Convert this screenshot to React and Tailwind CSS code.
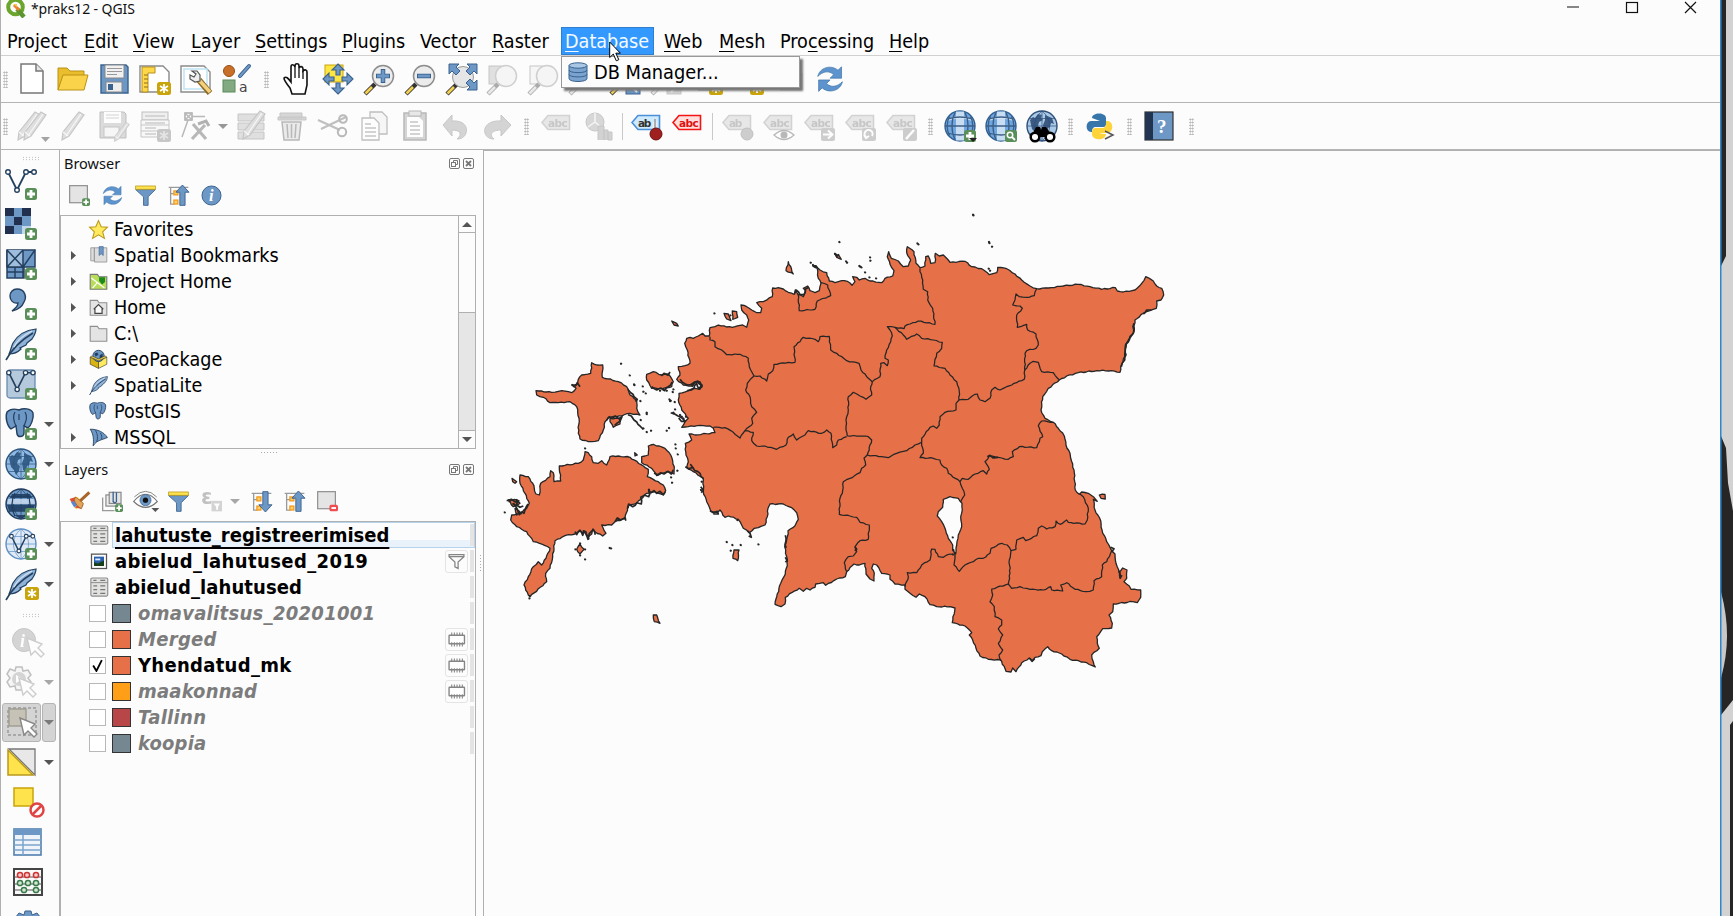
import React from "react";

/* ---------- geometry helpers ---------- */

// Reads "x,y x,y ..." given in thirds of a pixel from the origin (ox, oy).
const seg = (ox, oy, s) =>
  s.trim().split(/\s+/).map((p) => {
    const [x, y] = p.split(",").map(Number);
    return [ox + x / 3, oy + y / 3];
  });
const W = (s) => seg(500, 340, s);
const N = (s) => seg(660, 200, s);
const NE = (s) => seg(930, 200, s);
const S = (s) => seg(660, 430, s);
const SE = (s) => seg(930, 430, s);

// Adds a small deterministic wiggle so that lines look like surveyed borders.
const rough = (pts, amp, closed) => {
  const out = [];
  const n = pts.length;
  const last = closed ? n : n - 1;
  for (let i = 0; i < last; i++) {
    const [x0, y0] = pts[i];
    const [x1, y1] = pts[(i + 1) % n];
    out.push([x0, y0]);
    const len = Math.hypot(x1 - x0, y1 - y0);
    const k = Math.floor(len / 2.6);
    for (let j = 1; j < k; j++) {
      const t = j / k;
      const r = Math.sin((x0 * 12.9898 + y0 * 78.233 + j * 37.719) * 43.758) * amp;
      out.push([x0 + (x1 - x0) * t - ((y1 - y0) / len) * r, y0 + (y1 - y0) * t + ((x1 - x0) / len) * r]);
    }
  }
  if (!closed) out.push(pts[n - 1]);
  return out;
};
const toPath = (pts, closed, amp = 0.5) =>
  "M" + rough(pts, amp, closed).map((p) => p[0].toFixed(1) + " " + p[1].toFixed(1)).join("L") + (closed ? "Z" : "");

const mainland = [
  ...N("90,490 82,450 74,430 80,415 90,412 100,415 115,408 128,400 135,408 148,408 150,383 165,380 175,375 200,381 225,380 248,375 260,382 266,360 260,345 245,330 243,315 260,320 275,330 290,338 302,338 305,325 290,308 310,305 337,290 338,264 355,263 370,267 385,277 403,283 406,270 414,283 430,290 437,272 430,265 443,258 450,272 465,278 478,272 483,250 475,235 472,205 458,198 468,197 480,210 500,218 508,243 525,248 545,242 562,244 576,256 585,245 578,230 590,232 598,240 615,235 630,243 665,248 675,235 698,228 702,212 690,193 682,170 686,155 694,175 715,183 730,200 745,198 752,180 740,158 742,140 762,155 768,190 780,203 795,198 797,170 805,168 812,190 825,188 826,160 838,168 850,165 865,180"),
  ...NE("60,187 105,184 125,200 155,206 178,224 200,218 203,202 230,206 255,222 275,240 300,258 320,266 355,264 400,258 445,253 480,260 515,268 556,263 562,273 580,276 615,270 635,250 647,230 670,243 680,258 695,265 701,285 693,300 680,303 679,325 660,332 640,340 615,360 612,395 603,410 586,435 584,470 572,500 570,517 545,512 500,512 445,518 410,528 388,540 355,565 338,590 333,630 345,655 370,667 385,685 403,708 408,735 420,760"),
  ...SE("422,85 432,120 436,180 448,193 455,186 475,190 492,202 502,214 490,208 495,240 512,272 516,300 530,335 545,362 555,372 558,400 566,420 572,445 570,425 578,414 591,420 590,445 582,455 598,468 603,478 632,480 632,502 622,518 608,515 550,522 548,545 537,555 547,580 545,594 518,596 500,620 502,640 508,655 485,675 490,695 496,711 470,698 420,688 395,672 365,662 353,650 337,665 333,677 315,682 308,692 298,684 275,698 258,725 248,714 243,726 228,724 215,695 212,690 175,688 150,678 138,655 128,630 118,615 125,608 105,588 67,578 75,534 60,530 20,530 0,524"),
  ...S("795,500 778,492 768,502 750,490 735,478 735,465 705,462 690,448 690,435 665,430 650,405 640,402 635,415 643,430 642,453 630,447 618,432 615,400 598,405 582,402 560,425 556,440 530,447 497,466 490,458 467,462 465,472 450,480 440,475 430,484 418,475 395,488 376,502 375,522 363,530 345,523 350,500 362,460 372,440 382,407 380,380 374,350 382,320 384,302 405,287 415,268 410,248 395,233 370,222 330,222 324,235 322,260 315,285 295,293 283,295 268,308 250,295 235,268 205,258 195,262 180,240 172,248 152,243 140,215 130,185 130,145 100,125 80,112 85,95 78,75 76,40 95,30 87,12 105,15 165,8"),
  ...N("160,685 150,678 120,676 85,680 65,682 75,665 85,655 65,630 55,600 57,580 85,572 105,565 120,568 127,555 110,545 95,558 70,555 50,538 60,525 55,500 75,497"),
];

const lake = SE("40,208 60,200 85,205 96,220 97,240 92,260 95,290 85,315 80,345 77,372 68,360 68,345 55,325 45,295 35,275 22,258 25,245 38,232");

const borders = [
  N("150,410 150,420 165,425 165,440 185,450 200,464 240,463 265,475 268,500 275,515 282,528"),
  N("282,528 300,528 320,543 325,522 338,512 342,493 385,487 405,487 402,440 420,425 430,412 465,418 475,425 480,410 508,409 512,450 530,460 560,482 597,490 603,510 620,530 637,545"),
  N("282,528 262,550 257,570 270,590 275,620 290,637 275,655 278,670 255,692"),
  N("160,682 195,683 220,697 240,714 255,692 280,697 275,722 290,738 315,738 350,748 378,735 385,712 400,702 410,720 435,705 445,692 485,700 500,690 513,700 518,743 530,735 535,720 560,710"),
  N("637,545 632,560 635,585 618,598 600,588 580,577 565,590 565,630 560,650 558,680 562,708"),
  N("637,545 660,530 662,490 672,488 682,497 685,480 675,475 680,450 692,425 697,408 690,390 682,380 705,382"),
  N("780,205 780,215 788,240 790,268 803,275 803,300 818,325 825,373 775,363 750,372 735,378 732,386 705,382"),
  [...N("705,382 735,410 740,418 770,402 785,415 820,420 847,427 845,445 830,460 822,498 855,505 870,525"), ...NE("80,545 88,575 87,600 115,598 135,583 142,582 150,600 165,605 180,595 185,570 195,562 210,570 230,560 260,548 283,538 284,510")],
  NE("320,266 313,287 290,292 268,290 258,282 255,300 248,315 270,318 277,325 260,345 262,382 290,373 293,390 318,402 325,435 318,445 290,452 285,460 284,510 300,490 310,484 325,487 335,515 370,518 388,540"),
  [...NE("87,600 78,610 78,630 45,637 30,650 28,675 20,685 10,678 0,682"), ...N("785,715 785,727")],
  [...N("562,708 600,708 625,710 635,720 622,765"), ...S("665,80 685,83 710,70 740,62 765,45 785,37")],
  S("622,75 612,85 617,105 605,115 600,128 570,145 550,155 547,190 540,205 538,253 570,258 590,262 600,277 628,285 625,328 600,332 585,350 590,365 580,378 565,380 553,398 560,425"),
  [...S("785,37 790,70 780,83 820,85 840,90 845,105 860,115 865,130"), ...SE("90,155 97,175 104,195 92,215")],
  [...SE("90,155 97,145 115,148 135,132 160,122 170,132 178,118 165,95 178,78 205,82 235,88 250,80 247,65 268,50 320,53 330,25 338,20"), ...NE("325,677 335,663 370,667")],
  [...S("735,470 745,440 742,428 770,428 785,405 810,390 815,357 825,358 835,380 850,382 870,372"), ...SE("75,375 72,405 88,424 105,405 130,395 145,385 160,385 180,370 183,355 215,340 232,345 243,362")],
  SE("243,362 258,358 260,330 280,322 287,332 320,317 325,295 335,288 350,297 375,290 378,273 390,283 410,270 415,277 465,282 472,270 475,235 460,200 450,192"),
  SE("243,362 238,390 240,430 235,462 245,475 270,470 300,478 340,480 362,470 365,480 398,483 392,465 410,458 435,478 468,485 490,480 492,452 515,440 517,405 530,395 545,362"),
  SE("235,462 185,477 188,495 180,515 193,530 195,560 215,570 215,585 205,597 218,615 205,640 218,660 207,675 213,692"),
  N("414,283 418,332 465,328 472,303 512,287 503,255 483,248"),
];

const islands = [
  W("108,152 155,157 185,152 215,158 228,145 215,135 232,132 235,118 245,105 272,100 275,68 290,75 308,75 307,112 355,125 380,140 390,165 410,180 410,205 420,225 390,220 350,230 325,232 315,245 310,270 295,302 265,305 240,297 235,280 237,235 230,200 210,185 175,188 150,188 130,172 110,165"),
  W("330,235 358,235 360,252 340,262 330,245"),
  W("440,103 460,95 485,105 505,102 520,125 515,140 490,145 455,145 440,120"),
  W("445,318 460,313 495,325 512,345 523,380 522,402 500,395 470,407 455,385 425,368 425,350 445,345"),
  W("255,335 265,338 275,350 280,368 295,370 305,362 320,375 330,350 355,348 390,352 430,378 445,388 442,410 475,425 490,435 497,452 490,465 465,455 440,460 410,490 385,495 375,535 345,545 335,555 305,555 318,580 308,588 285,575 278,568 275,582 265,590 258,575 250,572 248,585 240,570 225,582 195,587 165,602 158,650 150,685 137,700 140,725 90,770 85,765 72,735 85,710 100,680 115,665 125,675 138,655 150,625 125,612 100,605 80,575 50,560 32,540 35,525 60,520 80,505 88,490 75,460 60,430 60,405 85,410 98,430 108,462 118,465 122,430 150,410 152,392 160,398 162,425 182,423 178,378 235,370 250,360"),
  W("240,612 252,628 240,642 230,628"),
  W("460,825 470,825 480,850 463,845"),
  W("702,630 717,630 713,662 699,655"),
  N("385,185 400,222 378,212"),
  N("192,340 205,342 213,362 200,357"),
  N("217,333 230,335 233,352 218,358"),
  N("35,363 50,370 55,378 42,375"),
  N("524,160 538,168 544,178 530,172"),
  SE("508,195 525,193 526,207 513,205"),
  W("36,415 50,425 45,430 38,425"),
  W("25,480 50,480 60,490 40,500"),
  W("45,505 60,515 50,525"),
  W("404,338 412,345 405,348"),
];

// Ragged shoals: short heavy strokes along the shallow coasts.
const shoals = [
  W("383,148 392,158 402,170 412,178 406,184"),
  W("320,240 328,230 338,234 346,228 356,236 366,230 360,244 344,256"),
  W("384,224 394,228 402,240 410,246 420,258 430,268"),
  W("215,133 222,140 232,128 240,140"),
  W("445,448 452,458 462,452 470,460 480,454 490,464 496,456"),
  W("384,505 386,492 398,500 410,488 424,492 422,472 434,466 446,470 448,446"),
  W("345,545 352,534 362,540 374,534 378,542"),
  W("225,575 230,584 240,572 248,586 252,574 264,598 268,580 280,568 286,584"),
  W("20,482 34,478 46,486 56,482 48,494 60,502 70,498"),
  W("40,490 52,508 58,524 66,516 72,520 84,492"),
  W("462,400 474,404 482,398 492,402 504,394 514,402 520,390"),
  W("630,512 640,518 652,514 655,522 640,522"),
  W("556,380 566,386 578,382 572,374 584,392 600,400 610,416"),
  W("602,440 610,450 604,458"),
  W("742,572 750,580 754,592 746,588"),
  W("540,118 556,132 572,134 584,126 600,126 606,140 596,146 590,130 582,144 574,150 562,152"),
  W("512,218 524,222 534,228 548,236 556,244 544,244 536,234"),
  W("455,140 470,150 482,144 494,152 505,140 516,126"),
  W("484,108 492,100 504,106 510,96"),
  N("405,280 408,270 420,284 432,284 436,268 446,262"),
  N("96,560 104,548 114,544 124,556 118,566"),
  NE("640,342 650,330 664,330"),
  NE("612,370 610,400 600,410 588,440 584,480 574,500"),
  SE("545,366 552,356 542,352"),
  SE("566,422 570,444 576,436"),
  SE("298,684 306,694 314,686"),
  SE("172,80 180,76 190,84 204,82"),
  S("376,316 378,352 374,346"),
  S("376,382 382,392 376,396"),
  S("585,350 590,358 584,362"),
];

const specks = [
  ...W("363,71 389,106 402,133 428,139 437,160 421,183 430,155 440,222 422,240 430,265 440,276 453,272 500,272 507,264 518,156 512,182 524,186 525,208 520,218 526,313 527,325 533,343 513,412 516,428 532,392 255,325 255,658 333,625 329,624 88,775 90,768 14,517 40,492 62,520 50,480 28,484 680,606 697,615 692,632 775,613 722,615 240,646 240,610 255,628 226,628 265,596 490,148 480,152 500,152 603,450 605,425 712,540 355,537 375,535 440,218 403,135 508,178"),
  ...N("538,126 775,133 772,130 630,172 631,182 598,198 604,202 601,200 615,217 628,232 648,235 452,188 459,195 466,199 558,184 561,188 163,340 525,162 530,168 535,165 211,346 65,650 70,655 60,645 78,650 40,640 40,568 30,603"),
  ...NE("129,44 130,46 177,126 178,129 186,140 176,206 180,212"),
  ...SE("68,322 70,360 74,370 68,373"),
];

/* ---------- small icon pieces ---------- */

const B = "#6d97c5";
const BD = "#3a628f";

const Ico = ({ children, s = "size-8", className = "" }) => (
  <svg viewBox="0 0 32 32" className={`${s} shrink-0 overflow-visible ${className}`} fill="none">{children}</svg>
);
const Plus = ({ x = 20, y = 20 }) => (
  <g>
    <rect x={x} y={y} width="12" height="12" rx="2.5" fill="#5a8f5a" />
    <path d={`M${x + 6} ${y + 2}v8M${x + 2} ${y + 6}h8`} stroke="#fff" strokeWidth="2.8" />
  </g>
);
const Star = ({ x = 19, y = 19 }) => (
  <g>
    <rect x={x} y={y} width="14" height="13" rx="2.5" fill="#c9a40a" />
    <path d={`M${x + 7} ${y + 2}v9M${x + 3} ${y + 4}l8 5M${x + 11} ${y + 4}l-8 5`} stroke="#fff" strokeWidth="1.8" />
  </g>
);
const Handle = () => (
  <g>
    <path d="M12 21L2 31" stroke="#333" strokeWidth="4.4" />
    <path d="M9 24L2.5 30.5" stroke="#f3d04e" strokeWidth="2.6" />
  </g>
);
const Zoom = ({ children }) => (
  <g>
    <Handle />
    <circle cx="20" cy="13" r="10.5" fill="#ececec" stroke="#8d8d8d" strokeWidth="1.5" />
    {children}
  </g>
);
const Pencil = ({ x = 0, y = 0 }) => (
  <g transform={`translate(${x} ${y})`}>
    <path d="M22 2l5 3L12 26l-7 4 1-8z" fill="#b9b4ac" stroke="#777" strokeWidth="1.2" />
    <path d="M24 4L9 26M6 22l5 4" stroke="#f2f0ec" strokeWidth="1.2" />
  </g>
);
const Tag = ({ fill = "#cfcac0", stroke = "#9b968c", ink = "#777", text = "abc" }) => (
  <g>
    <path d="M2 12.500L8 5.500H29.500V19.500H8z" fill={fill} stroke={stroke} strokeWidth="1.6" />
    <text x="8" y="16.500" fontSize="10.500" fontWeight="bold" fontFamily="DejaVu Sans" fill={ink} textLength={text.length * 6.6}>{text}</text>
  </g>
);
const Globe = ({ fill = "#9fc3e6", ink = "#3f6b98", land }) => (
  <g>
    <circle cx="16" cy="16" r="15" fill={fill} stroke={ink} strokeWidth="1.4" />
    {land ? (
      <path d="M4 10l3-3 2 1 3-4 4 1-1 3 2 2-4 2-1 4 3 2-1 5-3 4-2-5-3-3zM19 5l7 3 2 6-3-1-1 4-2 1-1 6-3-2-1-7 2-5z" fill={ink} opacity=".9" />
    ) : null}
    <path d="M1 16h30M3.500 8.500h25M3.500 23.500h25M16 1v30M16 1c-10 8-10 22 0 30M16 1c10 8 10 22 0 30" stroke={ink} strokeWidth="1" opacity=".7" />
  </g>
);
const ShinyGlobe = () => (
  <g>
    <circle cx="16" cy="16" r="15" fill="#6fa6e0" stroke="#2f5f92" strokeWidth="1.4" />
    <path d="M12 1.500h8v29h-8z" fill="#c9ddf2" /><path d="M4 9c6-4 18-4 24 0v2c-8-3-16-3-24 0z" fill="#dce9f6" opacity=".7" />
    <path d="M1 16h30M3.500 9q12.500-4 25 0M3.500 23q12.500 4 25 0M11 2.500c-4 8-4 19 0 27M21 2.500c4 8 4 19 0 27M5.500 6.500c-3 6-3 13 0 19M26.500 6.500c3 6 3 13 0 19" stroke="#3c5f86" strokeWidth="1.300" />
  </g>
);
const Feather = () => (
  <g>
    <path d="M31 1C22 2 13 6 8 15c-2 4-2 7-4 11 4 0 8-1 12-5l-1-1 6-3 1-2 5-4c2-3 4-6 4-10z" fill="#8fb2d8" stroke="#24405f" strokeWidth="1.200" />
    <path d="M28 5C18 11 8 19 1 32" stroke="#24405f" strokeWidth="1.600" />
    <path d="M27 3C19 7 12 12 9 19" stroke="#d3e2f1" strokeWidth="1.300" />
  </g>
);
const Elephant = () => (
  <g>
    <path d="M2 4c4-4 9-3 12-2 4-2 12-2 14 3 1 5-2 13-5 15l-4-2v7c0 4-6 5-7 1l-1-8-5 3C2 18 0 9 2 4z" fill={B} stroke="#24405f" strokeWidth="1.4" />
    <path d="M10 4c-3 5-1 10 1 14M20 4c3 5 1 9-1 14M14 6v6" stroke="#24405f" strokeWidth="1.2" />
  </g>
);
const Vee = ({ c = "#24405f" }) => (
  <g stroke={c} strokeWidth="1.8">
    <path d="M3 4l9 18 9-18h8" />
    <g fill="#fff" strokeWidth="1.4">
      <circle cx="3" cy="4" r="2.3" /><circle cx="12" cy="22" r="2.3" /><circle cx="21" cy="4" r="2.3" /><circle cx="29" cy="4" r="2.3" />
    </g>
  </g>
);
const Refresh = () => (
  <g fill="#5d94cd" stroke="#3f73a8" strokeWidth=".8">
    <path d="M2 13C4 3 17-1 25 6l4-4v13H16l4-4c-5-5-12-4-18 2z" />
    <path d="M30 19c-2 10-15 14-23 7l-4 4V17h13l-4 4c5 5 12 4 18-2z" />
  </g>
);
const Cursor = ({ x = 14, y = 12 }) => (
  <path transform={`translate(${x} ${y})`} d="M0 0l4 17 4-4 6 6 3-3-6-6 4-4z" fill="#fff" stroke="#888" strokeWidth="1.4" />
);
const Funnel = () => (
  <g>
    <path d="M1 7h30L20 18v13h-7V18z" fill={B} stroke={BD} strokeWidth="1.3" />
    <rect x="1" y="1.500" width="30" height="5" fill="#ffe34d" stroke="#b9991c" strokeWidth="1.2" />
  </g>
);
const TreeArrow = ({ up }) => (
  <g>
    <path d="M1 3.500h30M4 3v26h6M4 13h6" stroke="#9a9a9a" strokeWidth="2" />
    <rect x="9" y="9" width="6" height="6" fill="#ffd06b" stroke="#f39a1e" strokeWidth="2" />
    <rect x="9" y="23" width="6" height="6" fill="#ffd06b" stroke="#f39a1e" strokeWidth="2" />
    <path d={up ? "M22 0l10 11h-6v20h-8V11h-6z" : "M22 32l10-11h-6V1h-8v20h-6z"} fill={B} stroke={BD} strokeWidth="1.4" />
  </g>
);
const Table = () => (
  <g>
    <rect x="3" y="1.500" width="27" height="29" rx="2" fill="#e2e2e0" stroke="#8d8d8d" strokeWidth="1.8" />
    <path d="M3 9h27" stroke="#8d8d8d" strokeWidth="1.6" />
    <path d="M7 5.500h5M18 5.500h8M7 14h6M18 14h8M7 20h6M18 20h8M7 26h6M18 26h8" stroke="#777" strokeWidth="2" />
  </g>
);
const Folder = ({ children }) => (
  <g>
    <path d="M2 4h12l3 4h13v21H2z" fill="#e4e4e4" stroke="#8e8e8e" strokeWidth="1.8" />
    {children}
  </g>
);

/* ---------- layout pieces ---------- */

const Slot = ({ children, off }) => (
  <div className={`flex h-full w-[41px] shrink-0 items-center justify-center ${off ? "opacity-40 grayscale" : ""}`}>
    <Ico>{children}</Ico>
  </div>
);
const Dots = ({ className = "" }) => (
  <div className={`flex shrink-0 items-center ${className}`}>
    <div className="h-[17px] w-[5px] bg-[radial-gradient(#b0b0b0_0.8px,transparent_0.9px)] bg-[size:2.5px_3px]" />
  </div>
);
const Sep = ({ className }) => <div className={`h-[27px] w-px shrink-0 bg-[#c9c9c9] ${className}`} />;
const Down = ({ className = "" }) => (
  <svg viewBox="0 0 10 5" className={`h-[5px] w-[10px] shrink-0 ${className}`}><path d="M0 0h10L5 5z" fill="#555" /></svg>
);

const menu = [
  ["Pro", "j", "ect", "w-[77px]"],
  ["", "E", "dit", "w-[49px]"],
  ["", "V", "iew", "w-[58px]"],
  ["", "L", "ayer", "w-[64px]"],
  ["", "S", "ettings", "w-[87px]"],
  ["", "P", "lugins", "w-[78px]"],
  ["Vect", "o", "r", "w-[72px]"],
  ["", "R", "aster", "w-[73px]"],
  ["", "D", "atabase", "w-[99px]", true],
  ["", "W", "eb", "w-[55px]"],
  ["", "M", "esh", "w-[61px]"],
  ["Pro", "c", "essing", "w-[109px]"],
  ["", "H", "elp", "w-[60px]"],
];

function MenuBar() {
  return (
    <div className="flex h-[28px] shrink-0 items-stretch pl-[6px] text-[19.6px] leading-[30px] text-black">
      {menu.map(([a, b, c, w, open]) => (
        <div key={a + b + c} className={`shrink-0 ${w}`}>
          <div className={open ? "-ml-[4px] h-[28px] w-[93px] border border-[#2f7fd0] bg-[#3399ff] pl-[3px] leading-[28px] text-[#f4f9ff]" : ""}>
            {a}<span className="underline underline-offset-[3px]">{b}</span>{c}
          </div>
        </div>
      ))}
    </div>
  );
}

function FileToolbar() {
  return (
    <div className="flex h-[47px] shrink-0 items-center border-b border-[#b4b4b4]">
      <Dots className="ml-[2px] w-[8px]" />
      <Slot><path d="M5 1h15l7 7v22H5z" fill="#fff" stroke="#777" strokeWidth="1.500" /><path d="M20 1v7h7" fill="#e5e5e5" stroke="#777" strokeWidth="1.500" /></Slot>
      <Slot><path d="M1 27V5h9l3 3h14v5" fill="#e9bd2c" stroke="#b99216" /><path d="M1 27l5-15h25l-4 15z" fill="#fbd34a" stroke="#b99216" /></Slot>
      <Slot>
        <path d="M3 2h25l2 2v26H3z" fill={B} stroke={BD} strokeWidth="1.400" />
        <rect x="7" y="2" width="19" height="13" fill="#f1f1f1" stroke="#888" /><path d="M9 5.500h15M9 8.500h15M9 11.500h10" stroke="#999" />
        <rect x="8" y="19" width="16" height="10" fill="#eee" stroke="#888" /><rect x="10" y="21" width="5" height="6" fill={BD} />
      </Slot>
      <Slot><path d="M1 3h23l6 6v20H1z" fill="#fff" stroke="#8a8a8a" strokeWidth="1.400" /><path d="M8 7v20" stroke="#bfe3f5" strokeWidth="2" /><path d="M3 4h13v6H9v19H3z" fill="#ffd84a" stroke="#b8901c" /><path d="M5 12h4M5 16h4M5 20h4M5 24h4" stroke="#8f6f10" /><Star x={18} /></Slot>
      <Slot><path d="M1 3h23l6 6v20H1z" fill="#fff" stroke="#8a8a8a" strokeWidth="1.400" /><rect x="4" y="6" width="23" height="20" stroke="#bfe3f5" strokeWidth="1.500" /><path d="M19 17l11 13" stroke="#8a6a28" strokeWidth="6" /><path d="M19 17l11 12" stroke="#f3cf7e" strokeWidth="3.500" /><path d="M12 8l5 0 3 4v6l-5 1-5-3v-4l4 2 2-3z" fill="#eee" stroke="#555" strokeWidth="1.200" /></Slot>
      <Slot>
        <circle cx="8" cy="8" r="5.500" fill="#c8702a" stroke="#9b4f14" /><path d="M19 13L28 3" stroke={BD} strokeWidth="4" strokeLinecap="round" /><path d="M19 13L28 3" stroke={B} strokeWidth="2" strokeLinecap="round" />
        <rect x="2" y="17" width="12" height="12" fill="#82a982" stroke="#5a8a5a" /><text x="18" y="29" fontSize="14" fontFamily="DejaVu Sans" fill="#444">a</text>
      </Slot>
      <Dots className="w-[19px] justify-center" />
      <Slot>
        <path d="M9 31L7 25C3 20 1 17 1 15c2-2 4 0 7 4V4c0-3 3-3 4 0v-1c0-3 4-3 4 0v2c1-2 4-2 4 1v2c2-2 4-1 4 1v13l-2 9z" fill="#fff" stroke="#111" strokeWidth="1.600" transform="translate(2 0)" />
        <path d="M14 4v11M18 5v10M22 8v8" stroke="#111" strokeWidth="1.300" />
      </Slot>
      <Slot>
        <rect x="3" y="2" width="18" height="17" fill="#ffe640" stroke="#c9a40a" />
        <path d="M16 1l6 6h-4v5h-4V7h-4zM16 31l6-6h-4v-5h-4v5h-4zM1 16l6-6v4h5v4H7v4zM31 16l-6-6v4h-5v4h5v4z" fill={B} stroke={BD} strokeWidth="1.100" />
      </Slot>
      <Slot><Zoom><path d="M20 6v14M13 13h14" stroke={BD} strokeWidth="4.500" /><path d="M20 7v12M14 13h12" stroke={B} strokeWidth="2.800" /></Zoom></Slot>
      <Slot><Zoom><path d="M13 13h14" stroke={BD} strokeWidth="4.500" /><path d="M14 13h12" stroke={B} strokeWidth="2.800" /></Zoom></Slot>
      <Slot><Handle /><circle cx="18" cy="14" r="10.500" fill="#e6e6e6" stroke="#999" /><path d="M4 1h10l-3 3 4 4-4 4-4-4-3 3zM32 1H22l3 3-4 4 4 4 4-4 3 3zM32 27H22l3-3-4-4 4-4 4 4 3-3z" fill={B} stroke={BD} /></Slot>
      <Slot off><rect x="3" y="3" width="12" height="18" fill="#bdb7a6" stroke="#777" /><Zoom /></Slot>
      <Slot off><rect x="3" y="3" width="12" height="18" fill="#eee" stroke="#777" /><Zoom /></Slot>
      <Slot off><Zoom /></Slot>
      <Slot><Zoom /><rect x="17" y="19" width="14" height="12" fill={B} stroke={BD} /><path d="M19 20l9 9" stroke="#fff" strokeWidth="2" /></Slot>
      <Slot off><Zoom /><rect x="17" y="19" width="14" height="12" fill="#999" stroke="#777" /><path d="M30 21l-9 8" stroke="#fff" strokeWidth="2" /></Slot>
      <Slot><path d="M1 18l6 9h12V10H7z" fill="#ddd" stroke="#888" /><Star x={18} /></Slot>
      <Slot><path d="M8 2h14v24l-7-5z" fill={B} stroke={BD} /><Star x={18} /></Slot>
      <Slot off><path d="M1 18l6 9h22V10H7z" fill="#ddd" stroke="#555" /></Slot>
      <Slot><g transform="translate(2 2) scale(.88)"><Refresh /></g></Slot>
    </div>
  );
}

function EditToolbar() {
  return (
    <div className="flex h-[47px] shrink-0 items-center border-b border-[#b4b4b4]">
      <Dots className="ml-[2px] w-[8px]" />
      <Slot off><Pencil x={-3} /><Pencil x={3} /><path d="M25 27h9l-4.500 5z" fill="#222" /></Slot>
      <Slot off><Pencil /></Slot>
      <Slot off><path d="M2 2h24l2 2v24H2z" fill="#aaa" stroke="#666" /><rect x="6" y="2" width="17" height="11" fill="#fff" /><path d="M8 5h13M8 8h13" stroke="#999" /><rect x="6" y="17" width="15" height="10" fill="#eee" stroke="#777" /><g transform="translate(13 11) scale(.68)"><Pencil /></g></Slot>
      <Slot off><rect x="3" y="2" width="26" height="8" fill="#ddd" stroke="#666" /><path d="M2 10h28v17H2zM2 15h28M2 21h28" fill="#f3f3f3" stroke="#777" /><path d="M6 6h20M6 13h20M6 18h11M6 24h11" stroke="#888" strokeWidth="1.500" /><g className="brightness-75"><Star x={18} /></g></Slot>
      <Slot off><rect x="5" y="3" width="7" height="7" stroke="#333" strokeWidth="1.500" /><path d="M5 3l7 7M12 3l-7 7M12 6.500h13M8 10L2 27" stroke="#555" strokeWidth="1.500" /><path d="M12 29l13-14M13 14l13 15" stroke="#555" strokeWidth="3.200" /><path d="M18 14l8-3 3 5" stroke="#444" strokeWidth="3" /></Slot>
      <div className="flex w-[14px] shrink-0 justify-center opacity-60"><Down /></div>
      <Slot off><path d="M3 4h26v7H3zM3 13h26v7H3zM3 22h26v7H3z" fill="#b9b69a" stroke="#777" /><Pencil x={3} y={-1} /></Slot>
      <Slot off><path d="M4 3h22v5H4zM2 7h28v3H2z" fill="#a59f95" stroke="#777" /><path d="M6 12h19l-2 18H8z" fill="#d9cfcb" stroke="#7a4a4a" strokeWidth="1.500" /><path d="M11 14l1 14M15.500 14v14M20 14l-1 14" stroke="#7a4a4a" strokeWidth="1.500" /></Slot>
      <Slot off><path d="M1 10l22 10M4 19L29 7" stroke="#666" strokeWidth="2.200" /><circle cx="26" cy="9" r="3.800" stroke="#555" strokeWidth="2" /><circle cx="25" cy="22" r="4.200" stroke="#555" strokeWidth="2" /></Slot>
      <Slot off><path d="M12 2h12l5 5v17H12z" fill="#eee" stroke="#666" strokeWidth="1.300" /><path d="M4 8h12l5 5v17H4z" fill="#fff" stroke="#666" strokeWidth="1.300" /><path d="M7 14h6M7 18h11M7 22h11M7 26h11" stroke="#777" strokeWidth="1.500" /></Slot>
      <Slot off><rect x="5" y="3" width="22" height="27" fill="#999" stroke="#555" strokeWidth="1.500" /><path d="M8 7h12l4 4v16H8z" fill="#fff" /><rect x="10" y="1" width="12" height="5" fill="#ccc" stroke="#555" /><path d="M11 12h8M11 16h10M11 20h10M11 24h10" stroke="#777" strokeWidth="1.500" /></Slot>
      <Slot off><path d="M12 5v6c12-1 16 6 14 12-1 4-5 6-9 6 6-5 3-9-5-9v6L3 15z" fill="#999" stroke="#777" /></Slot>
      <Slot off><path d="M20 5v6C8 10 2 17 4 23c1 4 5 6 9 6-6-5-1-9 7-9v6l10-11z" fill="#8fa08f" stroke="#777" /></Slot>
      <Dots className="w-[18px] justify-center" />
      <Slot off><Tag /></Slot>
      <Slot off><circle cx="14" cy="12" r="9" fill="#aaa28f" stroke="#777" /><path d="M14 12V3M14 12l7 6M14 12l-7 5" stroke="#eee" strokeWidth="1.500" /><path d="M17 30V16h6v14M23 30V20h4v10M27 30v-8h4v8z" fill="#8b96a5" stroke="#777" /></Slot>
      <Sep className="ml-[5px] mr-[2px]" />
      <Slot><Tag fill="#cfeafd" stroke="#4a90d9" ink="#333" text="ab" /><path d="M25 12v8" stroke="#eee" strokeWidth="4" /><path d="M25 9v10" stroke="#999" strokeWidth="1.500" /><circle cx="26" cy="24" r="6" fill="#a01f1f" stroke="#701010" /></Slot>
      <Slot><Tag fill="#ffdede" stroke="#f41414" ink="#e01010" /></Slot>
      <Sep className="ml-[5px] mr-[3px]" />
      <Slot off><Tag text="ab" /><circle cx="26" cy="24" r="6" fill="#888" stroke="#666" /></Slot>
      <Slot off><Tag /><path d="M12 25q10-9 20 0q-10 9-20 0z" fill="#fff" stroke="#555" strokeWidth="1.300" /><circle cx="22" cy="25" r="3.500" fill="#555" /></Slot>
      <Slot off><Tag /><rect x="18" y="18" width="14" height="13" rx="2" fill="#888" /><path d="M20 24.500h9M25 20.500l4.500 4-4.500 4" stroke="#fff" strokeWidth="2" /></Slot>
      <Slot off><Tag /><rect x="18" y="18" width="14" height="13" rx="2" fill="#888" /><path d="M28 26a4 4 0 1 0-6 1M20 25l2 3 3-2" stroke="#fff" strokeWidth="2" /></Slot>
      <Slot off><Tag /><rect x="18" y="18" width="14" height="13" rx="2" fill="#888" /><path d="M21 29l8-9" stroke="#fff" strokeWidth="2.500" /></Slot>
      <Dots className="w-[18px] justify-center" />
      <Slot><ShinyGlobe /><Plus /><path d="M25 28h8l-4 4z" fill="#222" /></Slot>
      <Slot><ShinyGlobe /><rect x="20" y="20" width="12" height="12" rx="2" fill="#5a8f5a" /><circle cx="25" cy="25" r="2.700" stroke="#fff" strokeWidth="1.500" /><path d="M27 27l3 3" stroke="#fff" strokeWidth="1.800" /></Slot>
      <Slot><Globe fill="#a9c9e6" ink="#2f4f78" land /><path d="M5 27l5-10h4l1 3 1-3h4l7 10" fill="#000" /><circle cx="9" cy="27" r="4.300" fill="#fff" stroke="#000" strokeWidth="2.500" /><circle cx="24" cy="27" r="4.300" fill="#fff" stroke="#000" strokeWidth="2.500" /></Slot>
      <Dots className="w-[17px] justify-center" />
      <Slot><path d="M8 8c0-6 14-6 14 0v6c0 3-2 3-4 3h-6c-3 0-4 2-4 5-7 1-7-11-1-11h9" fill="#3776ab" /><path d="M22 11c8-1 8 11 2 12h-8c0 0 0 1 6 1 0 7-14 7-14 0 0-5 1-6 4-6h6c3 0 4-2 4-5z" fill="#ffd43b" /><path d="M21 21l8 4-8 4" stroke="#555" strokeWidth="1.500" /></Slot>
      <Dots className="w-[18px] justify-center" />
      <Slot><rect x="2" y="2" width="28" height="28" fill={B} stroke="#333" strokeWidth="1.200" /><rect x="2" y="2" width="8" height="28" fill="#22344f" /><text x="14" y="23" fontSize="19" fontFamily="Liberation Serif" fontWeight="bold" fill="#fff">?</text></Slot>
      <Dots className="w-[24px] justify-center" />
    </div>
  );
}

const Side = ({ children, arrow, off, className = "pl-[4px]" }) => (
  <div className={`flex h-[40px] shrink-0 items-center ${className}`}>
    <Ico className={off ? "opacity-40 grayscale" : ""}>{children}</Ico>
    {arrow ? <Down className={off ? "ml-[7px] opacity-50" : "ml-[7px]"} /> : null}
  </div>
);
const HDots = ({ className = "" }) => (
  <div className={`flex shrink-0 justify-center ${className}`}>
    <div className="h-[5px] w-[17px] bg-[radial-gradient(#b0b0b0_0.8px,transparent_0.9px)] bg-[size:3px_2.5px]" />
  </div>
);

function SideBar() {
  return (
    <div className="flex w-[58px] shrink-0 flex-col overflow-hidden">
      <HDots className="h-[14px] pt-[6px]" />
      <Side><Vee /><Plus /></Side>
      <Side>
        <path d="M0 0h26v26H0z" fill={B} />
        <path d="M0 0h9v8H0zM17 0h9v8h-9zM9 9h8v8H9zM0 18h9v8H0z" fill="#22304f" /><path d="M17 18h9v8h-9z" fill="#c4d8ec" />
        <Plus />
      </Side>
      <Side>
        <path d="M2 2h28v17H2zM2 19h17v11H2z" fill={B} stroke="#24405f" strokeWidth="1.500" /><path d="M2 2h16v17H2z" fill="#9fbddd" />
        <path d="M2 2l16 17M18 2L2 19M18 2v28M18 19L30 2M2 24h17M10 19v11M2 2v17h16" stroke="#24405f" strokeWidth="1.500" />
        <Plus />
      </Side>
      <Side><path d="M12 1c8 0 10 8 7 13-2 5-7 8-12 9 4-3 6-5 6-8-5 1-8-3-8-7s3-7 7-7z" fill={B} stroke="#24405f" strokeWidth="1.400" /><Plus /></Side>
      <Side><Feather /><Plus /></Side>
      <Side><rect x="2" y="2" width="28" height="28" rx="3" fill="#b5c9dc" stroke="#6a8cae" strokeWidth="1.300" /><g transform="translate(1 1) scale(.93)"><Vee /></g><Plus /></Side>
      <Side arrow><Elephant /><Plus /></Side>
      <Side arrow><Globe fill="#8fb8e2" ink="#2c557f" land /><Plus /></Side>
      <Side><Globe fill={B} ink="#1f3d60" /><path d="M7 6h18l2 4H5zM2 17h28l-2 6H4zM9 27h14l-5 3h-4z" fill="#1f3d60" opacity=".9" /><path d="M3 11h26l1 5H2z" fill="#cfe0f2" opacity=".8" /><path d="M10 5c-4 7-4 16 0 23M22 5c4 7 4 16 0 23" stroke="#1f3d60" strokeWidth="1.300" /><Plus /></Side>
      <Side arrow><Globe fill="#dfeaf6" ink="#5f90c4" /><g transform="translate(4 5) scale(.82)"><Vee /></g><Plus /></Side>
      <Side arrow><Feather /><Star x={20} /></Side>
      <HDots className="h-[18px] pt-[9px]" />
      <Side off className="pl-[10px]"><circle cx="13" cy="14" r="11.500" fill="#999" stroke="#777" /><text x="9" y="21" fontSize="18" fontStyle="italic" fontWeight="bold" fontFamily="Liberation Serif" fill="#fff">i</text><Cursor x={16} /></Side>
      <Side arrow off><path d="M11 1h6l1 4 5-1 3 5-3 3 3 4-3 5-5-1-1 4h-6l-1-4-5 1-3-5 3-4-3-4 3-5 5 2z" fill="#eee" stroke="#666" strokeWidth="1.500" /><circle cx="14" cy="13" r="7" fill="#999" /><path d="M11 9l7 4-7 4z" fill="#fff" /><Cursor /></Side>
      <div className="flex h-[40px] shrink-0 items-center gap-px pl-px">
        <div className="flex h-[39px] w-[39px] items-center justify-center rounded-[3px] border border-[#b4b4b4] bg-[#d4d4d4]">
          <Ico><rect x="3" y="3" width="17" height="17" fill="#c6c2b6" stroke="#a29e92" strokeWidth="1.500" /><rect x="2" y="2" width="28" height="27" stroke="#999" strokeWidth="1.500" strokeDasharray="3 2" /><Cursor /></Ico>
        </div>
        <div className="flex h-[39px] w-[14px] items-center justify-center rounded-[3px] border border-[#b4b4b4] bg-[#d4d4d4]"><Down className="opacity-70" /></div>
      </div>
      <Side arrow><path d="M4 3h26v26z" fill="#e8e8e8" stroke="#777" strokeWidth="1.300" /><path d="M3 4v25h25z" fill="#ffe34d" stroke="#b9991c" strokeWidth="1.500" /></Side>
      <Side className="pl-[11px]"><rect x="2" y="2" width="19" height="18" fill="#ffe34d" stroke="#c9a40a" strokeWidth="1.500" /><circle cx="25" cy="24" r="6.500" fill="#fff" stroke="#e04444" strokeWidth="2.500" /><path d="M21 28l8-8" stroke="#e04444" strokeWidth="2.500" /></Side>
      <Side className="pl-[11px]"><rect x="2" y="3" width="27" height="26" fill="#eef4fa" stroke="#5180b0" strokeWidth="1.600" /><rect x="2" y="3" width="27" height="6" fill={B} /><path d="M2 14h27M2 19h27M2 24h27M11 9v20" stroke="#7ea4cb" strokeWidth="1.500" /></Side>
      <Side className="pl-[11px]"><rect x="2" y="3" width="28" height="26" fill="#fafafa" stroke="#444" strokeWidth="2" /><path d="M2 11h28M2 18h28M2 24h28" stroke="#555" strokeWidth="1.200" /><g strokeWidth="1.500"><g stroke="#c33" fill="#f6caca"><circle cx="8" cy="9" r="2.600" /><circle cx="15" cy="9" r="2.600" /><circle cx="24" cy="9" r="2.600" /></g><g stroke="#3a7a4a" fill="#cfe8d2"><circle cx="8" cy="17" r="2.600" /><circle cx="16" cy="17" r="2.600" /><circle cx="24" cy="17" r="2.600" /><circle cx="12" cy="24" r="2.600" /><circle cx="24" cy="24" r="2.600" /></g></g></Side>
      <Side className="pl-[11px]"><path d="M13 5h6l1 4 5-2 4 5-3 4v16H6V16l-3-4 4-5 5 2z" fill={B} stroke={BD} /></Side>
    </div>
  );
}

const WinButtons = ({ className }) => (
  <div className={`flex gap-[3px] ${className}`}>
    <svg viewBox="0 0 11 11" className="size-[11px]" fill="none" stroke="#777"><rect x=".5" y=".5" width="10" height="10" rx="1.500" /><path d="M4.500 4V2.500h4v4H7" /><rect x="2.500" y="4.500" width="4" height="4" /></svg>
    <svg viewBox="0 0 11 11" className="size-[11px]" fill="none" stroke="#777"><rect x=".5" y=".5" width="10" height="10" rx="1.500" /><path d="M3 3l5 5M8 3L3 8" strokeWidth="1.800" /></svg>
  </div>
);
const PanelTool = ({ children, off }) => (
  <div className={`flex w-[33px] shrink-0 items-center justify-center ${off ? "opacity-35 grayscale" : ""}`}><Ico s="size-[21px]">{children}</Ico></div>
);

const tree = [
  ["Favorites", false, <path d="M16 1l4.500 10.500L31 12l-8 8 3 11-10-6-10 6 3-11-8-8 10.500-.5z" fill="#ffe95e" stroke="#b9991c" strokeWidth="1.800" />],
  ["Spatial Bookmarks", true, <g><path d="M3 3h6v22H3zM9 3h21v24H9z" fill="#ddd" stroke="#999" strokeWidth="1.500" /><path d="M17 1h7v15l-3.500-3-3.500 3z" fill={B} stroke={BD} /></g>],
  ["Project Home", true, <g><path d="M2 4h12l3 4h13v21H2z" fill="#b9dd5a" stroke="#777" strokeWidth="1.800" /><path d="M4 10l22 17M14 18L6 27" stroke="#fff" strokeWidth="2" /><path d="M17 9h10v8l-5 4-5-6z" fill="#1e8a1e" /></g>],
  ["Home", true, <Folder><path d="M8 19l8-8 8 8M10 18v8h12v-8" fill="#fff" stroke="#444" strokeWidth="2" /></Folder>],
  ["C:\\", true, <Folder />],
  ["GeoPackage", true, <g><path d="M2 12l14 6v13L2 24z" fill="#d8b312" stroke="#333" /><path d="M30 12l-14 6v13l14-7z" fill="#ffe95e" stroke="#333" /><circle cx="16" cy="10" r="9.500" fill={B} stroke="#24405f" strokeWidth="1.500" /><path d="M9 6l5-2 2 4-5 3zM18 9l5-3v6l-5 3z" fill="#1f3d60" /><path d="M2 12l14 6 14-6-3-2-11 5-11-5z" fill="#f6d743" stroke="#333" /></g>],
  ["SpatiaLite", true, <Feather />],
  ["PostGIS", false, <Elephant />],
  ["MSSQL", true, <g><path d="M2 2c13 0 23 5 29 14-8 4-18 4-24 14 1-10 1-19-5-28z" fill={B} stroke="#24405f" strokeWidth="1.500" /><path d="M11 4c4 7 4 13 2 19M19 8c3 5 3 7 2 11" stroke="#24405f" strokeWidth="1.400" /></g>],
];

function BrowserPanel() {
  return (
    <div className="flex h-[299px] shrink-0 flex-col">
      <div className="flex h-[26px] items-center justify-between pl-[4px]">
        <span className="pt-px font-['Noto_Sans',sans-serif] text-[14.5px] text-[#111]">Browser</span><WinButtons className="pr-[9px]" />
      </div>
      <div className="flex h-[39px] items-center pb-px pl-[3px]">
        <PanelTool><rect x="1" y="1" width="27" height="26" fill="#e4e4e4" stroke="#8e8e8e" strokeWidth="1.800" /><Plus x={20} y={20} /></PanelTool>
        <PanelTool><Refresh /></PanelTool>
        <PanelTool><Funnel /></PanelTool>
        <PanelTool><TreeArrow up /></PanelTool>
        <PanelTool><circle cx="16" cy="16" r="14.500" fill={B} stroke={BD} strokeWidth="1.500" /><text x="12" y="25" fontSize="25" fontStyle="italic" fontWeight="bold" fontFamily="Liberation Serif" fill="#fff">i</text></PanelTool>
      </div>
      <div className="flex h-[234px] w-[416px] border border-[#b0b0b0]">
        <div className="flex-1 overflow-hidden">
          {tree.map(([name, arrow, icon]) => (
            <div key={name} className="flex h-[26px] items-center pl-[10px] text-[19.6px] text-black">
              <svg viewBox="0 0 5 9" className={`h-[9px] w-[5px] shrink-0 ${arrow ? "" : "invisible"}`}><path d="M0 0l5 4.500L0 9z" fill="#555" /></svg>
              <Ico s="size-[19px]" className="ml-[13px] mr-[6px]">{icon}</Ico>
              <span className="whitespace-nowrap pt-px">{name}</span>
            </div>
          ))}
        </div>
        <div className="flex w-[17px] shrink-0 flex-col border-l border-[#b0b0b0]">
          <div className="flex h-[17px] items-center justify-center border-b border-[#b0b0b0]"><Down className="rotate-180" /></div>
          <div className="h-[79px]" />
          <div className="h-[119px] border-y border-[#b0b0b0] bg-[#e6e6e6]" />
          <div className="flex flex-1 items-center justify-center"><Down /></div>
        </div>
      </div>
    </div>
  );
}

const chip = <g stroke="#858585" strokeWidth="2.600"><rect x="2" y="8" width="29" height="16" rx="1" fill="#fff" /><path d="M7 8V3M12 8V3M17 8V3M22 8V3M27 8V3M7 29v-8M12 29v-8M17 29v-8M22 29v-8M27 29v-8" strokeWidth="2" /></g>;
const filterMark = <path d="M2 3h28v4L19 17v12l-6-3v-9L2 7z M2 7h28" stroke="#858585" strokeWidth="2.400" />;
const photo = <g><rect x="4" y="5" width="24" height="23" fill="#fff" stroke="#555" strokeWidth="2" /><rect x="8" y="9" width="16" height="15" fill="#2c5fae" /><path d="M8 24v-6l6 2 10-5v9z" fill="#174018" /><path d="M10 12h8v3h-8z" fill="#dcecff" /></g>;

const layers = [
  { n: "lahutuste_registreerimised", icon: <Table />, sel: true, t: "" },
  { n: "abielud_lahutused_2019", icon: photo, mark: filterMark, t: "tracking-[0.4px]" },
  { n: "abielud_lahutused", icon: <Table />, t: "tracking-[0.1px]" },
  { n: "omavalitsus_20201001", c: "bg-[#758791]", dim: true, t: "tracking-[0.3px]" },
  { n: "Merged", c: "bg-[#e67048]", dim: true, mark: chip, t: "tracking-[0.3px]" },
  { n: "Yhendatud_mk", c: "bg-[#e67048]", on: true, mark: chip, t: "tracking-[0.3px]" },
  { n: "maakonnad", c: "bg-[#ff9e17]", dim: true, mark: chip, t: "tracking-[0.2px]" },
  { n: "Tallinn", c: "bg-[#b84648]", dim: true, t: "tracking-[0.3px]" },
  { n: "koopia", c: "bg-[#758791]", dim: true, t: "tracking-[0.2px]" },
];

function LayersPanel() {
  return (
    <div className="flex min-h-0 flex-1 flex-col">
      <div className="flex h-[25px] items-center justify-between pl-[4px] pt-px">
        <span className="pt-px font-['Noto_Sans',sans-serif] text-[14.5px] text-[#111]">Layers</span><WinButtons className="pr-[3px]" />
      </div>
      <div className="flex h-[40px] shrink-0 items-center pl-[3px] pt-px">
        <PanelTool><path d="M1 12l12-3 9 9-11 10z" fill="#ffd23c" /><path d="M1 12l9-3 3 5-9 3z" fill="#e34a3a" /><path d="M9 25l9 2 4-6-6-3z" fill="#e34a3a" /><path d="M3 17l6-2 4 6-5 4z" fill="#5a86d6" /><path d="M10 9l12 10-3 8C14 25 9 19 8 13z" fill="#e2a45a" stroke="#8a5a20" /><path d="M17 15L31 2" stroke="#a8642a" strokeWidth="4.500" /></PanelTool>
        <PanelTool><path d="M1 10v20h18" stroke="#999" strokeWidth="2" /><rect x="6" y="6" width="17" height="17" fill="#eee" stroke="#888" strokeWidth="1.800" /><rect x="11" y="2" width="18" height="17" fill="#e4e4e4" stroke="#888" strokeWidth="1.800" /><path d="M17 1v15q3 4 5 0V2" stroke={BD} strokeWidth="2" /><Plus x={20} y={20} /></PanelTool>
        <PanelTool><path d="M-2 16q18-22 36 0q-18 18-36 0z" fill="#fff" stroke="#777" strokeWidth="1.800" /><circle cx="16" cy="14" r="8.500" fill={B} stroke={BD} /><circle cx="16" cy="14" r="4" fill="#111" /><path d="M-1 9Q16-8 33 9" stroke="#888" strokeWidth="1.500" /><path d="M25 26h12l-6 6z" fill="#555" /></PanelTool>
        <PanelTool><Funnel /></PanelTool>
        <PanelTool off><text x="0" y="20" fontSize="32" fontWeight="bold" fontFamily="DejaVu Sans" fill="#555">ε</text><path d="M16 15h16v16H16z" fill="#888" /><path d="M19 19h10l-3 5v5l-3-1v-4z" fill="#fff" /></PanelTool>
        <div className="flex w-[14px] shrink-0 justify-center opacity-50"><Down /></div>
        <div className="w-[3px] shrink-0" />
        <PanelTool><TreeArrow /></PanelTool>
        <PanelTool><TreeArrow up /></PanelTool>
        <PanelTool><rect x="1" y="1" width="27" height="26" fill="#e4e4e4" stroke="#8e8e8e" strokeWidth="1.800" /><rect x="19" y="21" width="13" height="10" rx="2.500" fill="#f04c50" /><path d="M22 26h7" stroke="#fff" strokeWidth="3" /></PanelTool>
      </div>
      <div className="w-[416px] flex-1 overflow-hidden border border-b-0 border-[#b0b0b0]">
        {layers.map((l) => (
          <div key={l.n} className="flex h-[26px] items-center pl-[28px]">
            {l.icon ? (
              <Ico s="size-[20px]" className="mr-[3px]">{l.icon}</Ico>
            ) : (
              <>
                <div className="flex size-[17px] shrink-0 items-center justify-center border border-[#b8b8b8] bg-white">
                  {l.on ? <svg viewBox="0 0 12 12" className="size-[13px]"><path d="M2 6l3 5 5-10" fill="none" stroke="#000" strokeWidth="1.700" /></svg> : null}
                </div>
                <div className={`ml-[6px] size-[19px] shrink-0 border border-[#333] ${l.c}`} />
              </>
            )}
            <div className={`flex h-[26px] min-w-0 flex-1 items-center whitespace-nowrap text-[20px] font-bold ${l.t} ${l.sel ? "border border-[#b5d3ea] bg-[linear-gradient(#fcfcfc_70%,#e9f2fb_70%)] pl-[2px] underline decoration-2 underline-offset-[5px] [text-decoration-skip-ink:none]" : l.icon ? "pl-[3px]" : "pl-[7px]"} ${l.dim ? "italic text-[#7c7c7c]" : "text-black"}`}>
              <span className="flex-1">{l.n}</span>
              {l.mark ? <div className="mr-[2px] flex size-[23px] shrink-0 items-center justify-center rounded-[3px] border border-[#e4e4e4]"><Ico s="size-[17px]">{l.mark}</Ico></div> : null}
              <div className={`h-[22px] w-[4px] shrink-0 bg-[#e4e4e4] ${l.sel ? "" : "mr-px"}`} />
            </div>
          </div>
        ))}
      </div>
    </div>
  );
}

function MapCanvas() {
  return (
    <svg viewBox="484 151 1236 765" className="block h-full w-full">
      <g fill="#e67048" stroke="#262626" strokeWidth="1.300" strokeLinejoin="round">
        <path d={toPath(mainland, true)} />
        {islands.map((p, i) => <path key={i} d={toPath(p, true, 0.5)} />)}
        <path d={toPath(lake, true, 0.3)} fill="#fcfcfc" />
        {borders.map((p, i) => <path key={i} d={toPath(p, false)} fill="none" strokeWidth="1.250" />)}
        {shoals.map((p, i) => <path key={i} d={toPath(p, false, 0.8)} fill="none" strokeWidth="1.700" />)}
      </g>
      <g fill="#262626">
        {specks.map(([x, y], i) => <path key={i} d={`M${x - 1.1} ${y - 0.7}l1.300-.5 1.200 1.100-.7 1.300-1.500-.2z`} />)}
      </g>
    </svg>
  );
}

export default function App() {
  return (
    <div className="relative flex h-[916px] w-[1733px] overflow-hidden bg-[#fcfcfc] font-['DejaVu_Sans_Condensed','DejaVu_Sans',sans-serif]">
      <div className="flex w-[1720px] shrink-0 flex-col border-l border-[#b0b0b0]">
        <div className="flex h-[27px] shrink-0 items-start justify-between">
          <div className="flex items-start pl-[5px]">
            <svg viewBox="0 0 20 20" className="-mt-[2px] size-[20px]" fill="none">
              <circle cx="9.500" cy="9" r="7.300" stroke="#6ca52e" strokeWidth="4" />
              <path d="M11 11l7 8" stroke="#5d9630" strokeWidth="4.500" /><path d="M8 7l5 5" stroke="#ef7f2e" strokeWidth="3" /><path d="M7 6h4v3" fill="#f7c948" />
            </svg>
            <span className="ml-[5px] font-['Noto_Sans',sans-serif] text-[14px] leading-[18px] tracking-[-0.1px] text-[#111]">*praks12 - QGIS</span>
          </div>
          <svg viewBox="0 0 130 20" className="mr-[23px] h-[20px] w-[130px]" fill="none" stroke="#111" strokeWidth="1.200">
            <path d="M0 7h12M118 2l11 11M129 2l-11 11" /><rect x="59.500" y="2.500" width="11" height="10" />
          </svg>
        </div>
        <MenuBar />
        <div className="h-px shrink-0 bg-[#d0d0d0]" />
        <FileToolbar />
        <EditToolbar />
        <div className="flex min-h-0 flex-1">
          <SideBar />
          <div className="flex w-[424px] shrink-0 flex-col border-l border-[#b0b0b0]">
            <BrowserPanel />
            <div className="flex h-[7px] shrink-0 items-center pl-[201px]"><div className="h-px w-[17px] bg-[repeating-linear-gradient(90deg,#aaa_0_1px,transparent_1px_3px)]" /></div>
            <div className="flex min-h-0 flex-1">
              <LayersPanel />
              <div className="w-[6px] shrink-0 pt-[99px]"><div className="mx-auto h-[16px] w-px bg-[repeating-linear-gradient(#aaa_0_1px,transparent_1px_3px)]" /></div>
            </div>
          </div>
          <div className="min-w-0 flex-1 border-l border-t border-[#b0b0b0]"><MapCanvas /></div>
        </div>
      </div>
      <svg viewBox="0 0 13 916" className="h-[916px] w-[13px] shrink-0">
        <rect width="13" height="916" fill="#d2d2d2" />
        <path d="M1 0h5v256l-5 10zM1 436l5 12 2 35 5 28v189L1 715z" fill="#262626" />
        <path d="M1 592q12 44 0 86z" fill="#c8c8c8" /><path d="M10 725l3-4v195h-3z" fill="#262626" />
        <rect width="1.500" height="916" fill="#2f86c8" />
      </svg>

      <div className="absolute left-[561px] top-[56px] flex h-[32px] w-[239px] items-center border border-[#999] bg-[#fcfcfc] pl-[6px] text-[19.8px] text-black shadow-[3px_3px_2px_#777]">
        <svg viewBox="0 0 20 20" className="mr-[6px] size-[20px]" stroke="#3a628f">
          <path d="M1 3.500v13c0 4 18 4 18 0v-13" fill="#7ba3cf" /><ellipse cx="10" cy="3.500" rx="9" ry="2.700" fill="#a9c6e4" />
          <path d="M1 8c0 3.500 18 3.500 18 0M1 12.300c0 3.500 18 3.500 18 0" fill="none" />
        </svg>
        <span className="pt-px">DB Manager...</span>
      </div>
      <svg viewBox="0 0 12 21" className="absolute left-[609px] top-[41px] h-[21px] w-[12px]"><path d="M.7 1v15.500l3.600-3.400 3 6.700 2.500-1.100-3-6.500h4.600z" fill="#fff" stroke="#000" /></svg>
    </div>
  );
}
